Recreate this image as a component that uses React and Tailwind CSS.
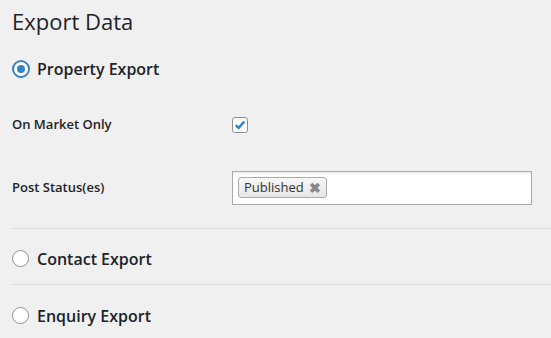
const font = { fontFamily: '"Open Sans", "Noto Sans", sans-serif' };

function Radio({ checked }) {
  if (checked) {
    return (
      <span className="flex h-[18px] w-[18px] shrink-0 items-center justify-center rounded-full border-2 border-[#3582c4] bg-white">
        <span className="h-2 w-2 rounded-full bg-[#3582c4]" />
      </span>
    );
  }
  return <span className="h-[17px] w-[17px] shrink-0 rounded-full border border-[#8c8f94] bg-white" />;
}

function Section({ label, checked }) {
  return (
    <div className={checked ? "flex items-center gap-[7px] pl-3" : "flex items-center gap-[8px] pl-3"}>
      <Radio checked={checked} />
      <span className="text-[16px] font-semibold text-[#1d2327]">{label}</span>
    </div>
  );
}

export default function App() {
  return (
    <div className="h-[338px] w-[551px] overflow-hidden bg-[#f0f0f1] text-[#1d2327]" style={font}>
      <h1 className="pl-3 pt-[7px] text-[22px] font-normal leading-[29px]">Export Data</h1>
      <div className="mt-[21px]">
        <Section label="Property Export" checked />
      </div>
      <div className="mt-[34px] flex items-center pl-3">
        <span className="w-[220px] text-[13px] font-semibold">On Market Only</span>
        <span className="flex h-4 w-4 items-center justify-center rounded-[3px] border border-[#8c8f94] bg-white">
          <svg viewBox="0 0 16 16" className="h-[14px] w-[14px]">
            <path d="M3.2 8.2 6.5 11.3 12.8 4" fill="none" stroke="#3582c4" strokeWidth="2.8" />
          </svg>
        </span>
      </div>
      <div className="mt-[36px] flex items-center pl-3">
        <span className="w-[220px] text-[13px] font-semibold">Post Status(es)</span>
        <div className="flex h-[34px] w-[300px] items-center border border-[#aaa] bg-white px-[5px] shadow-[inset_0_4px_5px_-4px_rgba(0,0,0,0.15)]">
          <span className="flex h-[21px] items-center gap-[5px] rounded-[3px] border border-[#aaa] bg-gradient-to-b from-[#f8f8f8] to-[#e6e6e6] pl-[5px] pr-[5px] text-[13px] text-[#333]">
            Published
            <span className="text-[14px] font-bold leading-none text-[#888]">✖</span>
          </span>
        </div>
      </div>
      <div className="mt-[23px] ml-3 border-t border-[#dcdcde]" />
      <div className="pt-[18px] pb-[13px]">
        <Section label="Contact Export" />
      </div>
      <div className="ml-3 border-t border-[#dcdcde]" />
      <div className="pt-[19px]">
        <Section label="Enquiry Export" />
      </div>
    </div>
  );
}
